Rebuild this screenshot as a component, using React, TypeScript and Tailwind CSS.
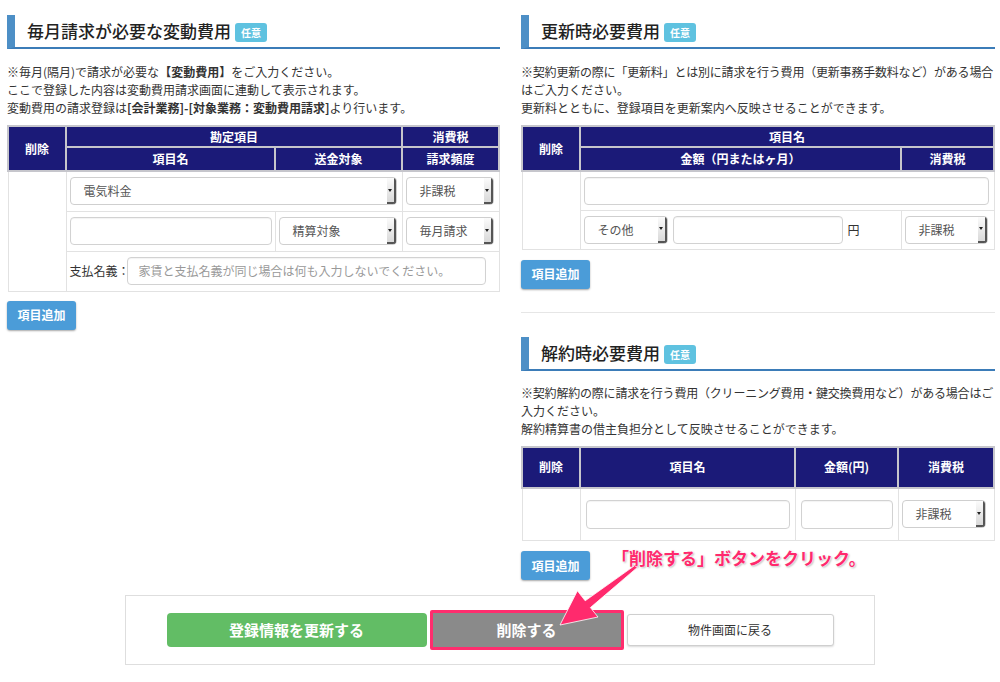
import type { ReactNode } from 'react'

const TH = 'border-2 border-[#c6c6cc] bg-[#1b1a78] p-0 text-center text-[12px] font-bold text-white'
const TD = 'border border-[#e2e2e2] p-0 align-middle'

function Badge() {
  return (
    <span className="ml-[4px] mt-[3px] inline-flex h-[19px] items-center rounded-[3px] bg-[#5fc2e0] px-[6px] text-[10px] font-bold text-white">
      任意
    </span>
  )
}

function Heading({ children }: { children: ReactNode }) {
  return (
    <div className="flex h-[34px] items-center border-b-2 border-l-[8px] border-b-[#3b7cb8] border-l-[#4d8fc6] pl-[12px]">
      <span className="text-[17px] font-medium text-[#222]">{children}</span>
      <Badge />
    </div>
  )
}

function Select({ value, className = '' }: { value: string; className?: string }) {
  return (
    <div className={`flex h-[28px] items-stretch overflow-hidden rounded-[4px] border border-[#cfcfcf] bg-white ${className}`}>
      <span className="flex flex-1 items-center pl-[13px] text-[12px] text-[#555]">{value}</span>
      <span className="flex w-[9px] items-center justify-center border-r-2 border-b-2 border-r-[#555] border-b-[#555] bg-linear-to-b from-[#fbfbfb] to-[#d9d9d9]">
        <span className="h-0 w-0 border-x-[2.5px] border-t-[3px] border-x-transparent border-t-[#222]" />
      </span>
    </div>
  )
}

function Input({ className = '', placeholder }: { className?: string; placeholder?: string }) {
  return (
    <div className={`flex h-[28px] items-center rounded-[4px] border border-[#d2d2d2] bg-white pl-[11px] text-[12px] text-[#999] shadow-[inset_0_1px_1px_rgba(0,0,0,0.05)] ${className}`}>
      {placeholder}
    </div>
  )
}

function AddButton({ className = '' }: { className?: string }) {
  return (
    <div className={`flex h-[29px] w-[69px] items-center justify-center rounded-[3px] bg-[#4b9cd8] text-[12px] font-bold text-white shadow-[0_1px_2px_rgba(0,0,0,0.35)] ${className}`}>
      項目追加
    </div>
  )
}

export default function App() {
  return (
    <div className="relative h-[682px] w-[1000px] overflow-hidden bg-white font-['Noto_Sans_CJK_JP',sans-serif] text-[#333]">
      <div className="flex gap-[21px] pl-[7px] pr-[5px] pt-[15px]">
        {/* 左: 変動費用 */}
        <div className="w-[493px]">
          <Heading>毎月請求が必要な変動費用</Heading>
          <div className="mt-[14px] whitespace-nowrap text-[12px] leading-[18px]">
            <div>
              ※毎月(隔月)で請求が必要な<b>【変動費用】</b>をご入力ください。
            </div>
            <div>ここで登録した内容は変動費用請求画面に連動して表示されます。</div>
            <div>
              変動費用の請求登録は<b>[会計業務]-[対象業務：変動費用請求]</b>より行います。
            </div>
          </div>
          <table className="mt-[8px] w-full table-fixed border-collapse">
            <colgroup>
              <col className="w-[58px]" />
              <col className="w-[209px]" />
              <col className="w-[127px]" />
              <col />
            </colgroup>
            <thead>
              <tr className="h-[21px]">
                <th rowSpan={2} className={TH}>削除</th>
                <th colSpan={2} className={TH}>勘定項目</th>
                <th className={TH}>消費税</th>
              </tr>
              <tr className="h-[24px]">
                <th className={TH}>項目名</th>
                <th className={TH}>送金対象</th>
                <th className={TH}>請求頻度</th>
              </tr>
            </thead>
            <tbody>
              <tr className="h-[40px]">
                <td rowSpan={3} className={TD} />
                <td colSpan={2} className={`${TD} pl-[3px] pr-[5px]`}>
                  <Select value="電気料金" />
                </td>
                <td className={`${TD} pl-[3px] pr-[5px]`}>
                  <Select value="非課税" />
                </td>
              </tr>
              <tr className="h-[40px]">
                <td className={`${TD} pl-[3px] pr-[3px]`}>
                  <Input />
                </td>
                <td className={`${TD} pl-[3px] pr-[5px]`}>
                  <Select value="精算対象" />
                </td>
                <td className={`${TD} pl-[3px] pr-[5px]`}>
                  <Select value="毎月請求" />
                </td>
              </tr>
              <tr className="h-[40px]">
                <td colSpan={3} className={`${TD} pl-[3px] pr-[13px]`}>
                  <div className="flex items-center">
                    <span className="text-[12px]">支払名義：</span>
                    <Input className="-ml-[3px] flex-1" placeholder="家賃と支払名義が同じ場合は何も入力しないでください。" />
                  </div>
                </td>
              </tr>
            </tbody>
          </table>
          <AddButton className="mt-[9px]" />
        </div>

        {/* 右: 更新時 / 解約時 */}
        <div className="w-[474px]">
          <Heading>更新時必要費用</Heading>
          <div className="mt-[14px] whitespace-nowrap text-[12px] leading-[18px]">
            <div className="tracking-[-0.2px]">※契約更新の際に「更新料」とは別に請求を行う費用（更新事務手数料など）がある場合</div>
            <div>はご入力ください。</div>
            <div>更新料とともに、登録項目を更新案内へ反映させることができます。</div>
          </div>
          <table className="mt-[8px] w-full table-fixed border-collapse">
            <colgroup>
              <col className="w-[58px]" />
              <col className="w-[321px]" />
              <col />
            </colgroup>
            <thead>
              <tr className="h-[21px]">
                <th rowSpan={2} className={TH}>削除</th>
                <th colSpan={2} className={TH}>項目名</th>
              </tr>
              <tr className="h-[24px]">
                <th className={TH}>金額（円またはヶ月）</th>
                <th className={TH}>消費税</th>
              </tr>
            </thead>
            <tbody>
              <tr className="h-[39px]">
                <td rowSpan={2} className={TD} />
                <td colSpan={2} className={`${TD} pl-[3px] pr-[5px]`}>
                  <Input />
                </td>
              </tr>
              <tr className="h-[39px]">
                <td className={`${TD} pl-[3px]`}>
                  <div className="flex items-center">
                    <Select value="その他" className="w-[84px]" />
                    <Input className="ml-[5px] w-[170px]" />
                    <span className="ml-[5px] text-[12px]">円</span>
                  </div>
                </td>
                <td className={`${TD} pl-[3px] pr-[6px]`}>
                  <Select value="非課税" />
                </td>
              </tr>
            </tbody>
          </table>
          <AddButton className="mt-[10px]" />

          <div className="mt-[23px] h-px bg-[#e6e6e6]" />

          <div className="mt-[24px]">
            <Heading>解約時必要費用</Heading>
          </div>
          <div className="mt-[13px] whitespace-nowrap text-[12px] leading-[18px]">
            <div className="tracking-[-0.2px]">※契約解約の際に請求を行う費用（クリーニング費用・鍵交換費用など）がある場合はご</div>
            <div>入力ください。</div>
            <div>解約精算書の借主負担分として反映させることができます。</div>
          </div>
          <table className="mt-[8px] w-full table-fixed border-collapse">
            <colgroup>
              <col className="w-[58px]" />
              <col className="w-[215px]" />
              <col className="w-[103px]" />
              <col />
            </colgroup>
            <thead>
              <tr className="h-[41px]">
                <th className={TH}>削除</th>
                <th className={TH}>項目名</th>
                <th className={TH}>金額(円)</th>
                <th className={TH}>消費税</th>
              </tr>
            </thead>
            <tbody>
              <tr className="h-[53px]">
                <td className={TD} />
                <td className={`${TD} pl-[5px] pr-[5px]`}>
                  <Input className="h-[29px]" />
                </td>
                <td className={`${TD} px-[5px]`}>
                  <Input className="h-[29px]" />
                </td>
                <td className={`${TD} pl-[3px] pr-[8px]`}>
                  <Select value="非課税" />
                </td>
              </tr>
            </tbody>
          </table>
          <AddButton className="mt-[10px]" />
        </div>
      </div>

      {/* 下部ボタン */}
      <div className="mx-auto mt-[15px] flex h-[70px] w-[750px] items-center justify-center gap-[3px] border border-[#dedede]">
        <div className="flex h-[34px] w-[260px] items-center justify-center rounded-[4px] bg-[#62bd65] text-[15px] font-bold text-white">
          登録情報を更新する
        </div>
        <div className="flex h-[40px] w-[194px] items-center justify-center rounded-[2px] border-[3px] border-[#ff2d6e] bg-[#8a8a8a] text-[15px] font-bold text-white">
          削除する
        </div>
        <div className="flex h-[32px] w-[207px] items-center justify-center rounded-[3px] border border-[#cfcfcf] bg-white text-[12px] text-[#333] shadow-[0_1px_2px_rgba(0,0,0,0.15)]">
          物件画面に戻る
        </div>
      </div>

      {/* 注釈 */}
      <div className="absolute left-[612px] top-[545px] whitespace-nowrap text-[17px] font-bold text-[#ff2a6d] [text-shadow:0_0_2px_#fff,0_0_2px_#fff,1px_1px_2px_rgba(0,0,0,0.35)]">
        「削除する」ボタンをクリック。
      </div>
      <svg className="pointer-events-none absolute left-0 top-0" width="1000" height="682" viewBox="0 0 1000 682">
        <polygon
          points="634.6,565.6 637.4,567.4 590.4,607.6 598,617 560,625 577.4,590.8 585.2,600.8"
          fill="#ff2a6d"
          stroke="#ffffff"
          strokeWidth="0.8"
          strokeLinejoin="round"
        />
      </svg>
    </div>
  )
}
